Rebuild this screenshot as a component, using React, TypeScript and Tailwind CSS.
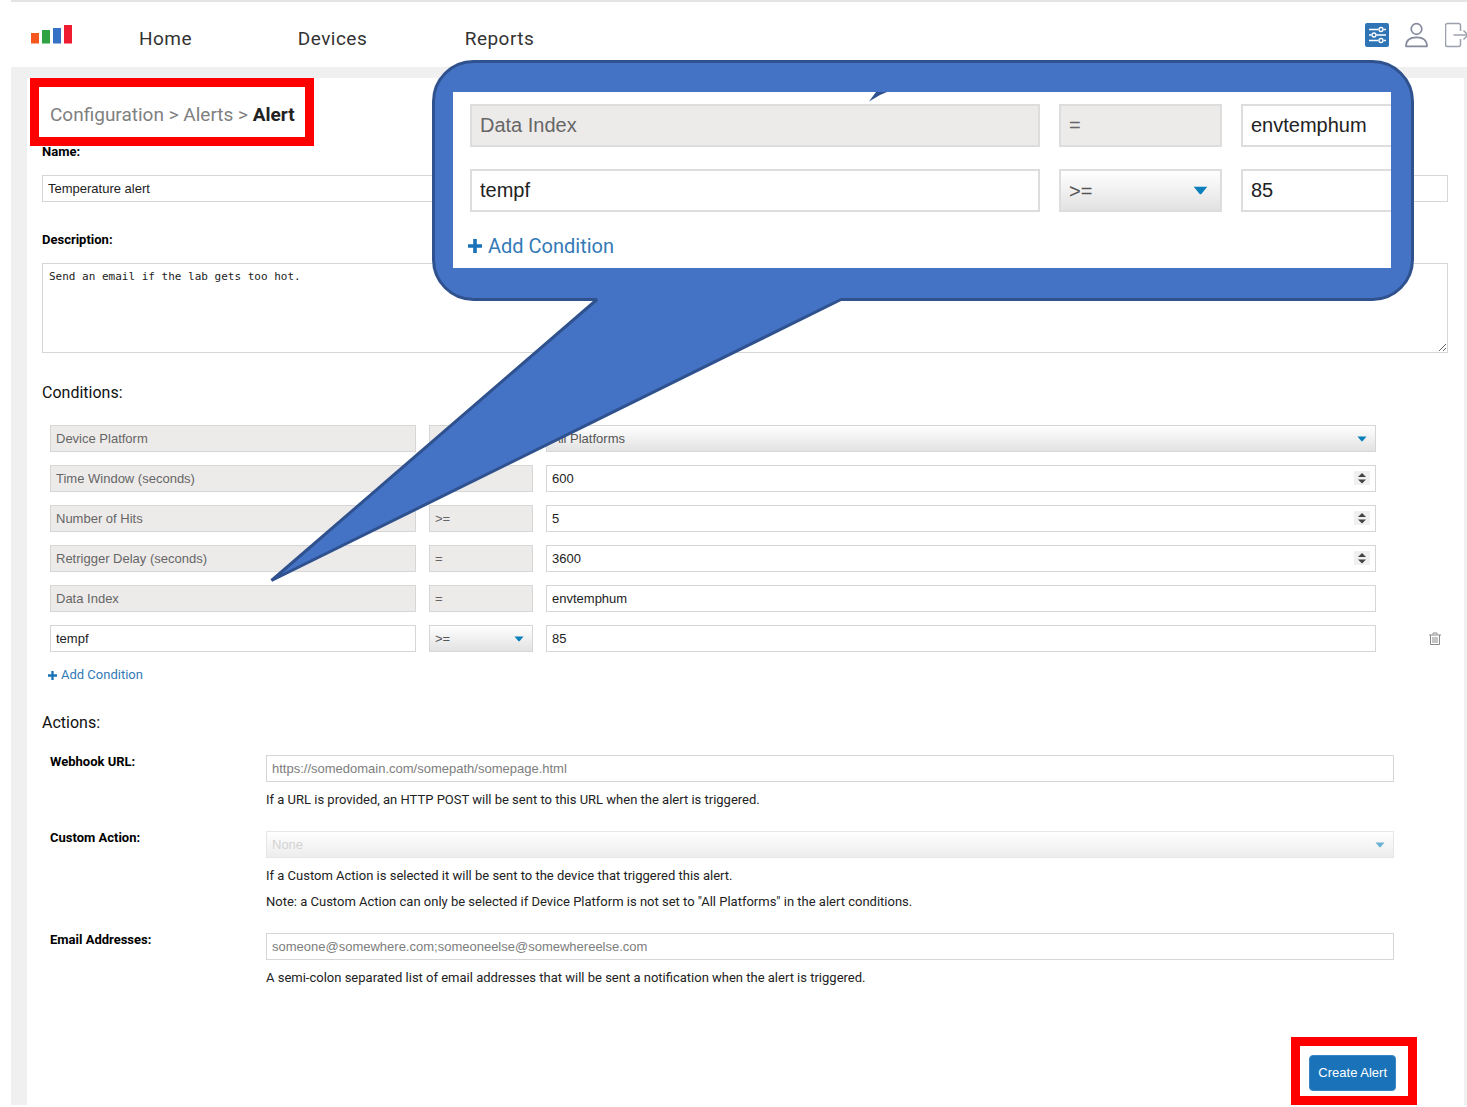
import type { ReactNode } from 'react';

const field =
  'block h-[27px] w-full rounded-none border border-[#d6d6d6] px-[5px] font-["Liberation_Sans",sans-serif] text-[13px] text-[#222222] placeholder:text-[#7d7d7d]';
const bigField =
  'block h-[43px] w-full rounded-none border-2 border-[#dddddd] px-2 font-["Liberation_Sans",sans-serif] text-[20px]';

function Caret({ className }: { className: string }) {
  return (
    <svg viewBox="0 0 10 6" className={className} aria-hidden="true">
      <path d="M0.5 0.5h9L5.7 5.1a1 1 0 0 1-1.4 0z" fill="#0a7fba" />
    </svg>
  );
}

function Fixed({ value, label }: { value: string; label: string }) {
  return <input aria-label={label} disabled defaultValue={value} className={`${field} bg-[#edebea] text-[#666666]!`} />;
}

function Text({ value, label }: { value: string; label: string }) {
  return <input type="text" aria-label={label} defaultValue={value} className={`${field} bg-white`} />;
}

function NumberField({ value, label }: { value: number; label: string }) {
  return (
    <div className="relative">
      <input
        type="number"
        aria-label={label}
        defaultValue={value}
        className={`${field} bg-white [appearance:textfield] [&::-webkit-inner-spin-button]:appearance-none`}
      />
      <svg viewBox="0 0 16 14" className="pointer-events-none absolute top-[6px] right-[6px] h-[14px] w-4" aria-hidden="true">
        <rect width="16" height="14" fill="#f0f0f0" />
        <path d="M4 6 8 2l4 4zM4 8.500 8 12.500l4-4z" fill="#444444" />
      </svg>
    </div>
  );
}

function Select({ value, label, id, disabled }: { value: string; label?: string; id?: string; disabled?: boolean }) {
  return (
    <div className={disabled ? 'relative opacity-60' : 'relative'}>
      <select
        id={id}
        aria-label={label}
        disabled={disabled}
        className={`${field} appearance-none bg-linear-to-b from-white to-[#e2e2e2] ${disabled ? 'text-[#b5b5b5]!' : 'text-[#555555]!'}`}
      >
        <option>{value}</option>
      </select>
      <Caret className="pointer-events-none absolute top-[11px] right-[9px] h-[6px] w-[10px]" />
    </div>
  );
}

function Plus({ className }: { className: string }) {
  return (
    <svg viewBox="0 0 10 10" className={className} aria-hidden="true">
      <path d="M3.700 0h2.600v3.700H10v2.600H6.300V10H3.700V6.300H0V3.700h3.700z" fill="#1a73b8" />
    </svg>
  );
}

function ConditionRow({ children }: { children: ReactNode }) {
  return <div className="grid grid-cols-[366fr_104fr_830fr_59fr] items-center gap-[13px]">{children}</div>;
}

function ActionRow({ id, label, help, children }: { id: string; label: string; help: string[]; children: ReactNode }) {
  return (
    <div className="grid grid-cols-[216px_1fr]">
      <label htmlFor={id} className="text-[13px] leading-5 font-bold text-black">
        {label}
      </label>
      <div className="pt-[3px]">
        {children}
        <div className="mt-2 flex flex-col gap-[6px] text-[13px] leading-5 text-[#222222]">
          {help.map((line) => (
            <p key={line}>{line}</p>
          ))}
        </div>
      </div>
    </div>
  );
}

function Header() {
  return (
    <header className="flex h-[67px] items-start border-t-2 border-[#e4e4e4] bg-white pl-5">
      <svg viewBox="0 0 42 20" className="mt-[23px] h-5 w-[42px]" role="img" aria-label="Logo">
        <rect y="8" width="8" height="10.500" fill="#f4581f" />
        <rect x="11" y="5" width="8" height="13.500" fill="#2fa243" />
        <rect x="22" y="3" width="8" height="15.500" fill="#3571c4" />
        <rect x="33" width="8" height="18.500" fill="#ee1c2e" />
      </svg>
      <nav className="mt-[23px] ml-[9px] flex text-[19px] leading-7 tracking-wide text-[#333333]">
        <a href="#home" className="w-[167px] text-center">Home</a>
        <a href="#devices" className="w-[167px] text-center">Devices</a>
        <a href="#reports" className="w-[167px] text-center">Reports</a>
      </nav>
      <div className="mt-[20px] ml-auto flex gap-4">
        <button type="button" aria-label="Configuration">
          <svg viewBox="0 0 24 26" className="h-[26px] w-6" fill="none" stroke="#fff" strokeWidth="1.300">
            <rect y="1" width="24" height="24" rx="2" fill="#2f74b5" stroke="none" />
            <path d="M4 7.500h9.500M18.500 7.500H21M4 13h2.500M11.500 13H21M4 18.500h9.500M18.500 18.500H21" />
            <circle cx="16" cy="7.500" r="2" />
            <circle cx="9" cy="13" r="2" />
            <circle cx="16" cy="18.500" r="2" />
          </svg>
        </button>
        <button type="button" aria-label="Account">
          <svg viewBox="0 0 24 26" className="h-[26px] w-6" fill="none" stroke="#858a9c" strokeWidth="1.700">
            <circle cx="11.500" cy="7" r="5.300" />
            <path d="M1 24.300c0-6 3.500-9 10.500-9s10.500 3 10.500 9z" strokeLinejoin="round" />
          </svg>
        </button>
        <button type="button" aria-label="Log out">
          <svg viewBox="0 0 22 26" className="h-[26px] w-[22px]" fill="none" stroke="#9da1ae" strokeWidth="1.500">
            <path d="M15.500 9V3.500a2 2 0 0 0-2-2H2.500a2 2 0 0 0-2 2v19a2 2 0 0 0 2 2h11a2 2 0 0 0 2-2V17" />
            <path d="M8.500 13H22M18.500 8.500 23 13l-4.500 4.500" />
          </svg>
        </button>
      </div>
    </header>
  );
}

function Callout() {
  return (
    <div className="absolute top-[60px] left-[270px] h-[523px] w-[1145px]">
      <svg viewBox="270 60 1145 523" className="pointer-events-none block h-[523px] w-[1145px]" aria-hidden="true">
        <path
          d="M473.500 61.500H1372.500a40 40 0 0 1 40 40V259.500a40 40 0 0 1-40 40H841L271.500 580.500 597 299.500H473.500a40 40 0 0 1-40-40V101.500a40 40 0 0 1 40-40z"
          fill="#4472c4"
          stroke="#2f528f"
          strokeWidth="3"
          strokeLinejoin="bevel"
        />
      </svg>
      <div className="absolute top-8 left-[183px] h-[176px] w-[938px] overflow-hidden bg-white pt-[12px] pl-[17px]">
        <svg viewBox="0 0 18 10" className="absolute top-0 left-[416px] h-[10px] w-[18px]" aria-hidden="true">
          <path d="M0 9.500 7 0h11L11 3z" fill="#2f528f" />
        </svg>
        <div className="grid w-[1100px] grid-cols-[570px_163px_1fr] gap-x-[19px] gap-y-[22px]">
          <input aria-label="Field, enlarged" disabled defaultValue="Data Index" className={`${bigField} bg-[#edebea] text-[#666666]`} />
          <input aria-label="Operator, enlarged" disabled defaultValue="=" className={`${bigField} bg-[#edebea] text-[#666666]`} />
          <input aria-label="Value, enlarged" defaultValue="envtemphum" className={`${bigField} bg-white text-[#222222]`} />
          <input aria-label="Condition field, enlarged" defaultValue="tempf" className={`${bigField} bg-white text-[#222222]`} />
          <div className="relative">
            <select
              aria-label="Condition operator, enlarged"
              className={`${bigField} appearance-none bg-linear-to-b from-white to-[#e2e2e2] text-[#555555]`}
            >
              <option>&gt;=</option>
            </select>
            <Caret className="pointer-events-none absolute top-[17px] right-[14px] h-[9px] w-[15px]" />
          </div>
          <input aria-label="Condition value, enlarged" defaultValue="85" className={`${bigField} bg-white text-[#222222]`} />
        </div>
        <button type="button" className="mt-5 -ml-[2px] flex items-center gap-[6px] text-[20px] leading-7 text-[#337ab7]">
          <Plus className="h-[14px] w-[14px]" />
          Add Condition
        </button>
      </div>
    </div>
  );
}

export default function App() {
  return (
    <div className='relative overflow-hidden bg-white pl-[11px] font-["Roboto",sans-serif]'>
      <Header />
      <div className="bg-[#f0f0f0] pt-[11px] pr-[3px] pl-4">
        <main className="bg-white pr-4 pl-[15px]">
          <h1 className="-ml-3 w-fit border-[9px] border-[#ff0000] pt-[14px] pr-[10px] pb-2 pl-[11px] text-[19px] leading-7 font-normal text-[#808080]">
            Configuration &gt; Alerts &gt; <b className="text-[#222222]">Alert</b>
          </h1>

          <label htmlFor="name" className="-mt-1 block text-[13px] leading-5 font-bold text-black">
            Name:
          </label>
          <input id="name" defaultValue="Temperature alert" className={`${field} mt-[13px] bg-white`} />
          <label htmlFor="description" className="mt-7 block text-[13px] leading-5 font-bold text-black">
            Description:
          </label>
          <textarea
            id="description"
            defaultValue="Send an email if the lab gets too hot."
            className='mt-[13px] block h-[90px] w-full resize border border-[#d6d6d6] bg-white px-[6px] py-[5px] font-["DejaVu_Sans_Mono",monospace] text-[11px] leading-4 text-[#222222]'
          />

          <h2 className="mt-7 text-[16px] leading-6 text-[#111111]">Conditions:</h2>
          <div className="mt-5 flex flex-col gap-[13px] pl-2">
            <ConditionRow>
              <Fixed label="Field" value="Device Platform" />
              <Fixed label="Operator" value="=" />
              <Select label="Device Platform" value="All Platforms" />
            </ConditionRow>
            <ConditionRow>
              <Fixed label="Field" value="Time Window (seconds)" />
              <Fixed label="Operator" value="=" />
              <NumberField label="Time Window (seconds)" value={600} />
            </ConditionRow>
            <ConditionRow>
              <Fixed label="Field" value="Number of Hits" />
              <Fixed label="Operator" value=">=" />
              <NumberField label="Number of Hits" value={5} />
            </ConditionRow>
            <ConditionRow>
              <Fixed label="Field" value="Retrigger Delay (seconds)" />
              <Fixed label="Operator" value="=" />
              <NumberField label="Retrigger Delay (seconds)" value={3600} />
            </ConditionRow>
            <ConditionRow>
              <Fixed label="Field" value="Data Index" />
              <Fixed label="Operator" value="=" />
              <Text label="Data Index" value="envtemphum" />
            </ConditionRow>
            <ConditionRow>
              <Text label="Condition field" value="tempf" />
              <Select label="Condition operator" value=">=" />
              <Text label="Condition value" value="85" />
              <button type="button" aria-label="Delete condition" className="mr-[7px] justify-self-end">
                <svg viewBox="0 0 12 14" className="h-[14px] w-3" fill="none" stroke="#8a8a8a">
                  <path d="M0 3h12M4 2.500V1h4v1.500M1.500 3v9.500h9V3M4 5v6M6 5v6M8 5v6" />
                </svg>
              </button>
            </ConditionRow>
          </div>
          <button type="button" className="mt-[13px] ml-[6px] flex items-center gap-1 text-[13px] leading-5 text-[#337ab7]">
            <Plus className="h-[9px] w-[9px]" />
            Add Condition
          </button>

          <h2 className="mt-[26px] text-[16px] leading-6 text-[#111111]">Actions:</h2>
          <div className="mt-[17px] flex flex-col gap-[18px] pr-[54px] pl-2">
            <ActionRow
              id="webhook"
              label="Webhook URL:"
              help={['If a URL is provided, an HTTP POST will be sent to this URL when the alert is triggered.']}
            >
              <input id="webhook" type="url" placeholder="https://somedomain.com/somepath/somepage.html" className={`${field} bg-white`} />
            </ActionRow>
            <ActionRow
              id="action"
              label="Custom Action:"
              help={[
                'If a Custom Action is selected it will be sent to the device that triggered this alert.',
                'Note: a Custom Action can only be selected if Device Platform is not set to "All Platforms" in the alert conditions.',
              ]}
            >
              <Select id="action" value="None" disabled />
            </ActionRow>
            <ActionRow
              id="emails"
              label="Email Addresses:"
              help={['A semi-colon separated list of email addresses that will be sent a notification when the alert is triggered.']}
            >
              <input id="emails" type="text" placeholder="someone@somewhere.com;someoneelse@somewhereelse.com" className={`${field} bg-white`} />
            </ActionRow>
          </div>

          <div className="mt-[49px] mr-[31px] ml-auto w-fit border-[9px] border-[#ff0000] pt-[9px] pr-3 pb-[5px] pl-[9px]">
            <button
              type="button"
              className='block h-9 rounded-[4px] border border-[#3a86c4] bg-[#1a73b8] px-2 font-["Liberation_Sans",sans-serif] text-[13px] text-white'
            >
              Create Alert
            </button>
          </div>
        </main>
      </div>
      <Callout />
    </div>
  );
}
